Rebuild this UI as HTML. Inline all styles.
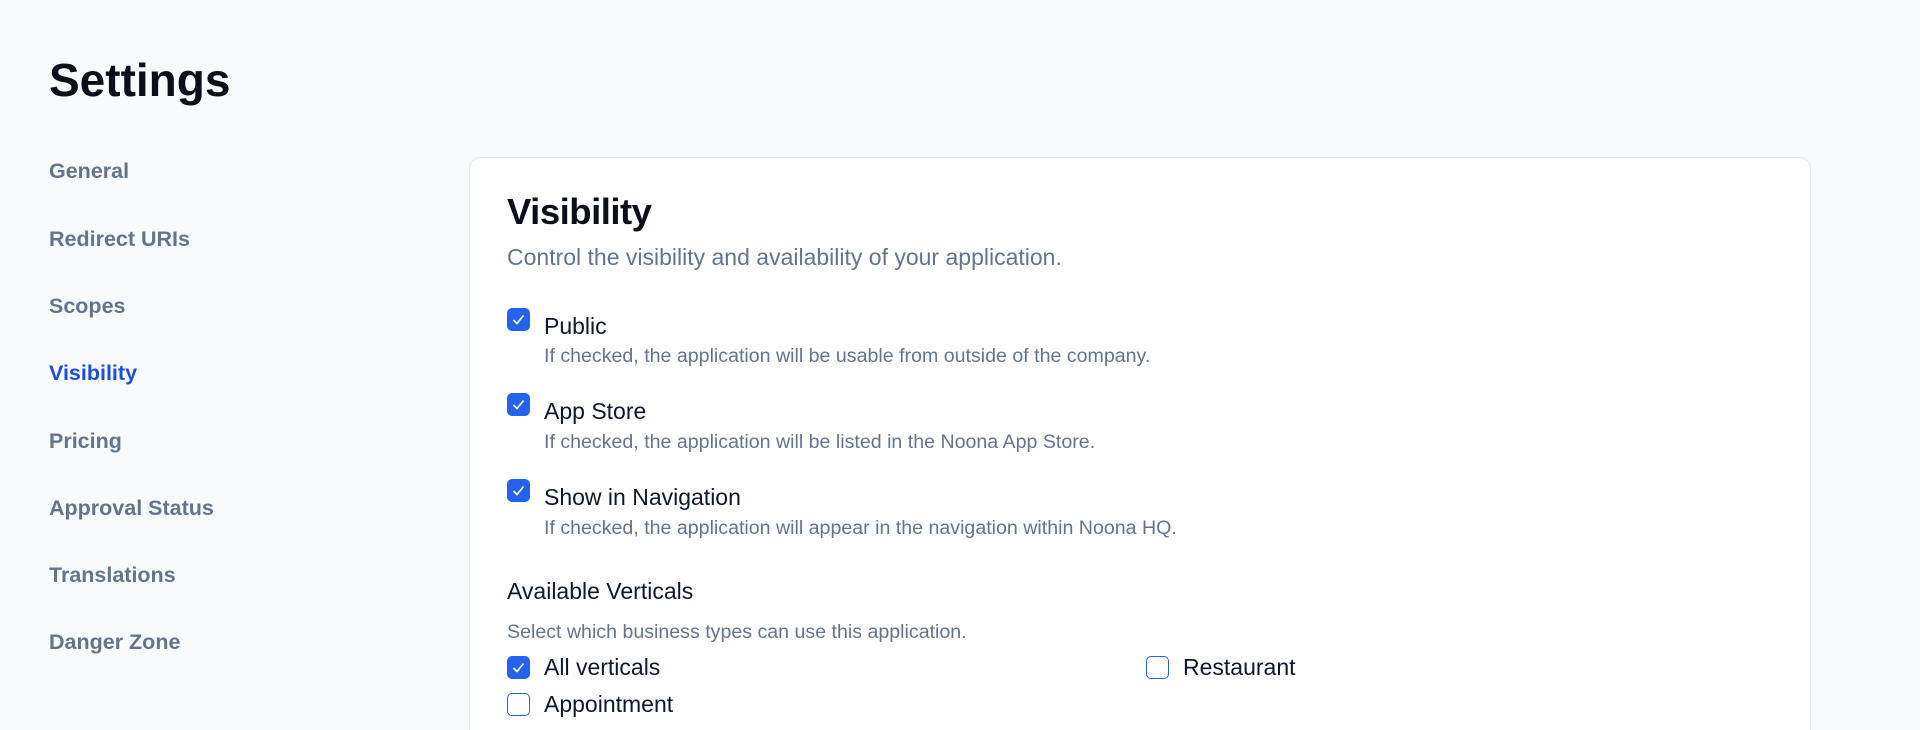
<!DOCTYPE html>
<html style="width:1920px;height:730px;overflow:hidden"><head><meta charset="utf-8"><style>
*{margin:0;padding:0;box-sizing:border-box}
body{width:1920px;height:730px;overflow:hidden;background:#f8fafc;font-family:"Liberation Sans",Arial,sans-serif;position:relative}
.a{position:absolute;white-space:nowrap}
h1{position:absolute;left:49px;top:50px;font-size:46px;font-weight:bold;color:#0b0f1a;line-height:60px}
.nav{position:absolute;left:49px;font-size:21.5px;font-weight:bold;color:#64748b;line-height:24px}
.card{position:absolute;left:469px;top:157px;width:1342px;height:573px;background:#fff;border:1.5px solid #e2e8f0;border-bottom:none;border-radius:12px 12px 0 0}
.cb{position:absolute;width:23px;height:23px;border-radius:5px;background:#2563eb}
.cb svg{position:absolute;left:4px;top:4px}
.cbe{position:absolute;width:23px;height:23px;border-radius:5px;border:1.5px solid #2563eb;background:#fff}
.lbl{position:absolute;font-size:23px;color:#0f172a;line-height:26px;white-space:nowrap}
.desc{position:absolute;font-size:19.6px;color:#64748b;line-height:24px;white-space:nowrap}
</style></head><body>
<h1>Settings</h1>
<div class="nav" style="top:159px">General</div>
<div class="nav" style="top:227px">Redirect URIs</div>
<div class="nav" style="top:294px">Scopes</div>
<div class="nav" style="top:361px;color:#1d4ed8">Visibility</div>
<div class="nav" style="top:429px">Pricing</div>
<div class="nav" style="top:496px">Approval Status</div>
<div class="nav" style="top:563px">Translations</div>
<div class="nav" style="top:630px">Danger Zone</div>

<div class="card"></div>
<div class="a" style="left:507px;top:190px;font-size:36.5px;font-weight:bold;color:#0b0f1a;line-height:44px;letter-spacing:-0.5px">Visibility</div>
<div class="a" style="left:507px;top:243px;font-size:23px;color:#64748b;line-height:28px">Control the visibility and availability of your application.</div>

<div class="cb" style="left:507px;top:308px"><svg width="15" height="15" viewBox="0 0 15 15"><path d="M2.5 8 L6 11.5 L12.5 3.5" stroke="#fff" stroke-width="1.6" fill="none"/></svg></div>
<div class="lbl" style="left:544px;top:313px">Public</div>
<div class="desc" style="left:544px;top:344px">If checked, the application will be usable from outside of the company.</div>

<div class="cb" style="left:507px;top:393px"><svg width="15" height="15" viewBox="0 0 15 15"><path d="M2.5 8 L6 11.5 L12.5 3.5" stroke="#fff" stroke-width="1.6" fill="none"/></svg></div>
<div class="lbl" style="left:544px;top:398px">App Store</div>
<div class="desc" style="left:544px;top:430px">If checked, the application will be listed in the Noona App Store.</div>

<div class="cb" style="left:507px;top:479px"><svg width="15" height="15" viewBox="0 0 15 15"><path d="M2.5 8 L6 11.5 L12.5 3.5" stroke="#fff" stroke-width="1.6" fill="none"/></svg></div>
<div class="lbl" style="left:544px;top:484px">Show in Navigation</div>
<div class="desc" style="left:544px;top:516px">If checked, the application will appear in the navigation within Noona HQ.</div>

<div class="lbl" style="left:507px;top:578px">Available Verticals</div>
<div class="desc" style="left:507px;top:620px">Select which business types can use this application.</div>

<div class="cb" style="left:507px;top:656px"><svg width="15" height="15" viewBox="0 0 15 15"><path d="M2.5 8 L6 11.5 L12.5 3.5" stroke="#fff" stroke-width="1.6" fill="none"/></svg></div>
<div class="lbl" style="left:544px;top:654px">All verticals</div>
<div class="cbe" style="left:1146px;top:656px"></div>
<div class="lbl" style="left:1183px;top:654px">Restaurant</div>
<div class="cbe" style="left:507px;top:693px"></div>
<div class="lbl" style="left:544px;top:691px">Appointment</div>
</body></html>
